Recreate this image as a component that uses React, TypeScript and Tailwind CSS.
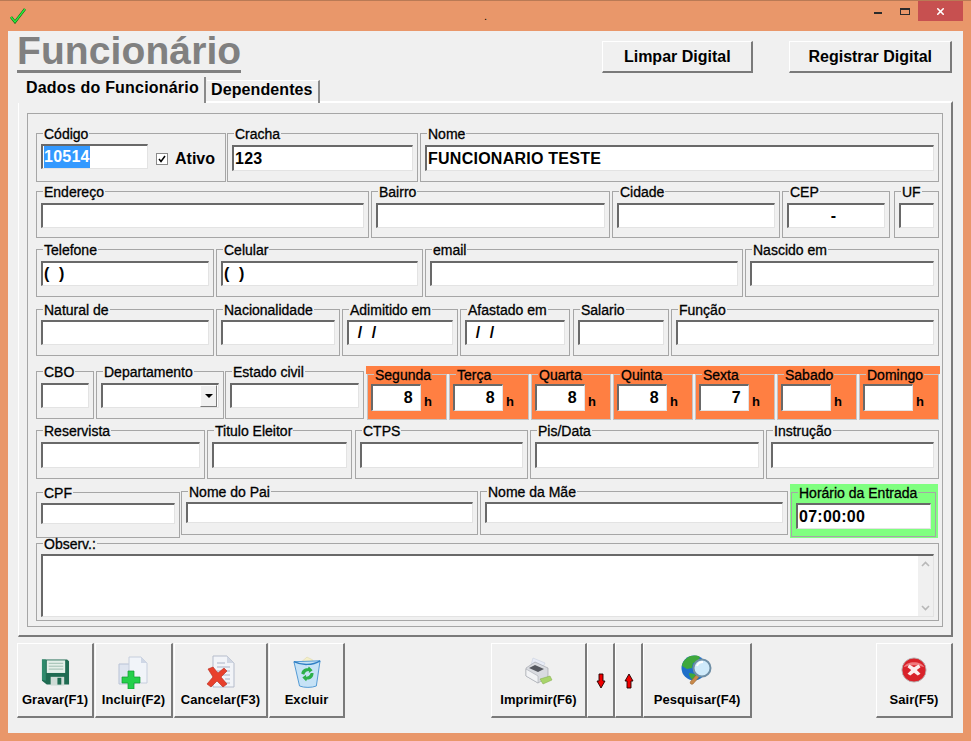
import type { ReactNode } from "react"
import { X } from "lucide-react"

function Group({ label, className, children }: { label: string; className: string; children?: ReactNode }) {
  return (
    <fieldset className={`min-w-0 shrink-0 border border-[#a6a6a6] px-[4px] ${className}`}>
      <legend className="relative top-[1px] ml-[2px] px-[1px] text-[14px] leading-4 text-black [-webkit-text-stroke:0.3px_#000]">{label}</legend>
      {children}
    </fieldset>
  )
}

function Field({ value, className = "h-[25px]", children }: { value?: string; className?: string; children?: ReactNode }) {
  return (
    <div
      className={`flex items-center overflow-hidden border-t-2 border-l-2 border-r border-b border-t-[#696969] border-l-[#696969] border-r-[#e3e3e3] border-b-[#e3e3e3] bg-white pl-[1px] text-[16px] font-bold tracking-[0.25px] whitespace-pre text-black ${className}`}
    >
      {value}
      {children}
    </div>
  )
}

function Day({ label, value }: { label: string; value?: string }) {
  return (
    <fieldset className="h-[54px] w-[80px] min-w-0 shrink-0 border border-[#c4c4c4] bg-[#ff7f42] px-[3px] pt-[2px]">
      <legend className="relative top-[1px] ml-[3px] px-[1px] text-[14px] leading-4 text-black [-webkit-text-stroke:0.3px_#000]">{label}</legend>
      <div className="flex items-end">
        <Field value={value} className="h-[27px] w-[50px] shrink-0 justify-end pr-[7px]" />
        <span className="ml-[3px] text-[13px] leading-[18px] font-bold text-black">h</span>
      </div>
    </fieldset>
  )
}

function ToolButton({ label, className, icon }: { label?: string; className: string; icon: ReactNode }) {
  return (
    <button className={`flex h-[75px] shrink-0 flex-col items-center border-t border-l border-r-2 border-b-2 border-t-white border-l-white border-r-[#7a7a7a] border-b-[#7a7a7a] bg-[#f0f0f0] ${className}`}>
      <span className="mt-[11px] flex h-[34px] items-center justify-center">{icon}</span>
      <span className="mt-[3px] text-[13px] leading-4 font-bold tracking-[0.05px] text-black">{label}</span>
    </button>
  )
}

const FloppyIcon = () => (
  <svg width="29" height="30" viewBox="0 0 30 30">
    <path d="M1 2h26l2 2v24H6l-5-4z" fill="#1f6b52" />
    <path d="M1 2h4v22l-4-1z" fill="#2f8a6c" />
    <rect x="6" y="3" width="19" height="13" fill="#e4efe9" />
    <path d="M8 6h15M8 9h15M8 12h15" stroke="#9dbcae" />
    <rect x="10" y="20" width="14" height="9" fill="#cfdcd6" />
    <rect x="17" y="21" width="4" height="7" fill="#1f6b52" />
  </svg>
)

const AddIcon = () => (
  <svg width="32" height="34" viewBox="0 0 32 34">
    <path d="M1 9h12l4 4v16H1z" fill="#dfe5f0" stroke="#b9c3d6" />
    <path d="M11 2h12l6 6v20H11z" fill="#f1f4f9" stroke="#c6cedd" />
    <path d="M23 2v6h6z" fill="#cfd7e6" />
    <path d="M10 16h6v6h6v6h-6v6h-6v-6H4v-6h6z" fill="#25d04a" stroke="#129a30" strokeWidth="0.7" />
  </svg>
)

const CancelIcon = () => (
  <svg width="32" height="34" viewBox="0 0 32 34">
    <path d="M8 1h14l7 7v24H8z" fill="#f2f4f8" stroke="#b5bccb" />
    <path d="M22 1v7h7z" fill="#d0d6e2" />
    <path d="M12 8h8M12 12h13M12 16h13M18 20h7M20 24h5M20 28h5" stroke="#aab3c6" />
    <path d="M3 14l5-2 5 6 6-5 3 3-6 6 6 7-4 3-6-6-6 6-4-3 6-7z" fill="#e8402c" stroke="#b52a1c" strokeWidth="0.6" />
  </svg>
)

const BinIcon = () => (
  <svg width="28" height="34" viewBox="0 0 30 36">
    <path d="M8 8l7-6 6 3 2 5z" fill="#f4efc8" stroke="#d8d0a0" strokeWidth="0.5" />
    <path d="M1 7l28-1-4 27c-5 2-13 2-18 0z" fill="#c6e2f6" stroke="#4a94d2" />
    <path d="M1 7c8 4 20 4 28-1" fill="none" stroke="#2f7fc4" strokeWidth="1.5" />
    <path d="M9 20c0-4 3-6 7-6l1-2 4 4-4 3v-2c-2 0-4 1-5 4z" fill="#2cb04a" />
    <path d="M22 19c0 5-3 7-7 7l-1 2-4-4 4-3v2c2 0 4-1 5-4z" fill="#2cb04a" />
  </svg>
)

const PrinterIcon = () => (
  <svg width="28" height="30" viewBox="0 0 28 30">
    <path d="M8 1l12 5-3 6-11-4z" fill="#e8ecf6" stroke="#c3cadb" strokeWidth="0.5" />
    <path d="M1 11l9-6 13 6v9l-10 6-12-7z" fill="#d9dbe0" stroke="#9b9ea6" strokeWidth="0.6" />
    <path d="M4 11l6-3 9 4-6 3z" fill="#55585f" />
    <path d="M1 12l12 7v7L1 19z" fill="#f2f3f5" stroke="#9b9ea6" strokeWidth="0.5" />
    <path d="M15 22l10-3 2 4-9 4z" fill="#a8d46a" stroke="#7ea848" strokeWidth="0.5" />
  </svg>
)

const GlobeIcon = () => (
  <svg width="32" height="32" viewBox="0 0 32 32" className="mb-[4px]">
    <circle cx="13" cy="14" r="12.5" fill="#1f6fc8" />
    <path d="M6 4c4-3 10-3 13-1l-2 5-5 1-1 5-5 1-5-3c0-3 2-6 5-8z" fill="#3fa83c" />
    <path d="M8 19l6 1 2 5-4 1c-2-1-4-4-4-7z" fill="#3fa83c" />
    <path d="M10 27l6-7 3 2-7 8c-2 1-4-1-2-3z" fill="#c98a4a" stroke="#8f5d2c" strokeWidth="0.5" />
    <circle cx="21" cy="14" r="8.5" fill="#cfeafa" stroke="#6f8fa6" strokeWidth="2" />
    <path d="M16 12c1-3 4-4 6-4" fill="none" stroke="#fff" strokeWidth="2" />
  </svg>
)

const ExitIcon = () => (
  <svg width="26" height="26" viewBox="0 0 28 28" className="mb-[4px]">
    <circle cx="14" cy="14" r="13" fill="#d9222a" stroke="#b4b4b4" />
    <path d="M3 11c3-7 19-7 22 0-6-3-16-3-22 0z" fill="#f07a7e" />
    <path d="M9 8l5 3 5-3 2 3-4 3 4 4-3 2-4-3-4 3-3-2 4-4-4-3z" fill="#fbeeee" />
  </svg>
)

const ArrowIcon = ({ up }: { up?: boolean }) => (
  <svg width="10" height="16" viewBox="0 0 10 16" className={up ? "mt-[18px]" : "mt-[18px] rotate-180"}>
    <path d="M5 1l4 7H7v7H3V8H1z" fill="#f00000" stroke="#200000" strokeWidth="0.9" />
  </svg>
)

export default function App() {
  return (
    <div className="flex h-[741px] w-[971px] flex-col overflow-hidden border-t border-[#b97a55] bg-[#e9976a] font-['Liberation_Sans',Arial,sans-serif]">
      {/* Title bar */}
      <div className="flex h-[30px] shrink-0 items-start">
        <svg width="16" height="16" viewBox="0 0 16 16" className="mt-[7px] ml-[10px]">
          <path d="M1 9l4 5L15 1" fill="none" stroke="#0c6a18" strokeWidth="2.6" />
          <path d="M1 9l4 5L15 1" fill="none" stroke="#2cf03c" strokeWidth="1.3" />
        </svg>
        <span className="ml-[458px] pt-[9px] text-[11px] leading-3 text-black">.</span>
        <div className="mt-[11px] ml-[387px] h-[2px] w-[8px] bg-[#2b2b2b]" />
        <div className="mt-[7px] ml-[18px] h-[7px] w-[10px] border border-t-2 border-[#2b2b2b]" />
        <div className="ml-[8px] flex h-[20px] w-[45px] items-center justify-center bg-[#c75050]">
          <X size={11} strokeWidth={3.5} className="text-white" />
        </div>
      </div>

      {/* Client area */}
      <div className="ml-[8px] flex h-[702px] w-[955px] shrink-0 flex-col bg-[#f0f0f0]">
        <div className="flex h-[46px] shrink-0 items-start">
          <h1 className="mt-[1px] ml-[9px] border-b-[3px] border-[#808080] text-[39px] leading-[38px] font-bold tracking-[0.1px] text-[#808080]">Funcionário</h1>
          <button className="mt-[10px] ml-[361px] h-[32px] w-[151px] border-t border-l border-r-2 border-b-2 border-t-white border-l-white border-r-[#7a7a7a] border-b-[#7a7a7a] text-[16px] font-bold text-black">
            Limpar Digital
          </button>
          <button className="mt-[10px] ml-[36px] h-[32px] w-[163px] border-t border-l border-r-2 border-b-2 border-t-white border-l-white border-r-[#7a7a7a] border-b-[#7a7a7a] text-[16px] font-bold text-black">
            Registrar Digital
          </button>
        </div>

        {/* Tabs */}
        <div className="relative z-10 ml-[10px] -mb-[2px] flex h-[26px] shrink-0 items-end">
          <div className="flex h-[26px] w-[188px] items-start border-r-2 border-[#8a8a8a] bg-[#f0f0f0] pt-[1px] pl-[8px] text-[16px] leading-[20px] font-bold tracking-[0.2px] text-black">
            Dados do Funcionário
          </div>
          <div className="ml-[1px] flex h-[23px] w-[113px] items-start border-t border-r-2 border-t-white border-r-[#8a8a8a] pl-[4px] text-[16px] leading-[18px] font-bold tracking-[0.1px] text-black">
            Dependentes
          </div>
        </div>

        {/* Tab panel */}
        <div className="ml-[10px] h-[536px] w-[935px] shrink-0 border-t-2 border-l border-r-2 border-b-2 border-t-white border-l-white border-r-[#7a7a7a] border-b-[#7a7a7a] pt-[10px] pl-[8px]">
          <div className="h-[514px] w-[916px] border border-[#a6a6a6] pl-[8px]">
            <div className="mt-[11px] flex h-[57px]">
              <Group label="Código" className="h-[57px] w-[190px] pt-[3px]">
                <div className="flex items-start">
                  <Field className="h-[25px] w-[107px] shrink-0">
                    <span className="bg-[#3399ff] pt-[1px] pb-[1px] text-white">10514</span>
                  </Field>
                  <div className="mt-[9px] ml-[8px] flex h-[12px] w-[12px] items-center justify-center border border-[#8a8a8a] bg-white">
                    <svg width="8" height="8" viewBox="0 0 8 8"><path d="M1 4l2 2.5L7 1" fill="none" stroke="#000" strokeWidth="1.5" /></svg>
                  </div>
                  <span className="mt-[3px] ml-[7px] text-[16px] leading-6 font-bold text-black">Ativo</span>
                </div>
              </Group>
              <Group label="Cracha" className="ml-[1px] h-[57px] w-[191px] pt-[4px]"><Field value="123" className="h-[26px]" /></Group>
              <Group label="Nome" className="ml-[2px] h-[57px] w-[519px] pt-[4px]"><Field value="FUNCIONARIO TESTE" className="h-[26px]" /></Group>
            </div>

            <div className="mt-[1px] flex h-[55px]">
              <Group label="Endereço" className="h-[55px] w-[333px] pt-[4px]"><Field /></Group>
              <Group label="Bairro" className="ml-[2px] h-[55px] w-[239px] pt-[4px]"><Field /></Group>
              <Group label="Cidade" className="ml-[2px] h-[55px] w-[168px] pt-[4px]"><Field /></Group>
              <Group label="CEP" className="ml-[2px] h-[55px] w-[108px] pt-[4px]"><Field value="-" className="h-[25px] justify-center pr-[7px]" /></Group>
              <Group label="UF" className="ml-[4px] h-[55px] w-[45px] pt-[4px]"><Field /></Group>
            </div>

            <div className="mt-[3px] flex h-[56px]">
              <Group label="Telefone" className="h-[56px] w-[178px] pt-[4px]"><Field value="(  )" /></Group>
              <Group label="Celular" className="ml-[2px] h-[56px] w-[207px] pt-[4px]"><Field value="(  )" /></Group>
              <Group label="email" className="ml-[2px] h-[56px] w-[318px] pt-[4px]"><Field /></Group>
              <Group label="Nascido em" className="ml-[2px] h-[56px] w-[194px] pt-[4px]"><Field /></Group>
            </div>

            <div className="mt-[4px] flex h-[55px]">
              <Group label="Natural de" className="h-[55px] w-[178px] pt-[3px]"><Field /></Group>
              <Group label="Nacionalidade" className="ml-[2px] h-[55px] w-[124px] pt-[3px]"><Field /></Group>
              <Group label="Adimitido em" className="ml-[2px] h-[55px] w-[116px] pt-[3px]"><Field value=" /  /" className="h-[25px] indent-[3px]" /></Group>
              <Group label="Afastado em" className="ml-[2px] h-[55px] w-[110px] pt-[3px]"><Field value=" /  /" className="h-[25px] indent-[3px]" /></Group>
              <Group label="Salario" className="ml-[3px] h-[55px] w-[96px] pt-[3px]"><Field /></Group>
              <Group label="Função" className="ml-[2px] h-[55px] w-[268px] pt-[3px]"><Field /></Group>
            </div>

            <div className="mt-[7px] flex h-[56px] items-start">
              <Group label="CBO" className="h-[56px] w-[58px] pt-[4px]"><Field /></Group>
              <Group label="Departamento" className="ml-[2px] h-[56px] w-[128px] pt-[4px]">
                <Field className="h-[25px] justify-end pr-[1px]">
                  <div className="flex h-[22px] w-[17px] items-center justify-center border-t border-l border-r border-b border-t-white border-l-white border-r-[#7a7a7a] border-b-[#7a7a7a] bg-[#f0f0f0]">
                    <svg width="8" height="4" viewBox="0 0 8 4"><path d="M0 0h8L4 4z" fill="#000" /></svg>
                  </div>
                </Field>
              </Group>
              <Group label="Estado civil" className="ml-[1px] h-[56px] w-[139px] pt-[4px]"><Field /></Group>
              <div className="mt-[3px] ml-[2px] flex h-[54px] w-[574px] gap-[2px] bg-[linear-gradient(#ff7f42_8px,#f0f0f0_8px)] pl-[1px]">
                <Day label="Segunda" value="8" />
                <Day label="Terça" value="8" />
                <Day label="Quarta" value="8" />
                <Day label="Quinta" value="8" />
                <Day label="Sexta" value="7" />
                <Day label="Sabado" />
                <Day label="Domingo" />
              </div>
            </div>

            <div className="mt-[3px] flex h-[57px]">
              <Group label="Reservista" className="h-[57px] w-[169px] pt-[4px]"><Field className="h-[26px]" /></Group>
              <Group label="Titulo Eleitor" className="ml-[2px] h-[57px] w-[145px] pt-[4px]"><Field className="h-[26px]" /></Group>
              <Group label="CTPS" className="ml-[3px] h-[57px] w-[173px] pt-[4px]"><Field className="h-[26px]" /></Group>
              <Group label="Pis/Data" className="ml-[2px] h-[57px] w-[234px] pt-[4px]"><Field className="h-[26px]" /></Group>
              <Group label="Instrução" className="ml-[2px] h-[57px] w-[173px] pt-[4px]"><Field className="h-[26px]" /></Group>
            </div>

            <div className="mt-[4px] flex h-[55px] items-start">
              <Group label="CPF" className="mt-[1px] h-[54px] w-[144px] pt-[3px]"><Field className="h-[21px]" /></Group>
              <Group label="Nome do Pai" className="ml-[1px] h-[52px] w-[297px] pt-[3px]"><Field className="h-[21px]" /></Group>
              <Group label="Nome da Mãe" className="ml-[2px] h-[52px] w-[308px] pt-[3px]"><Field className="h-[21px]" /></Group>
              <div className="mt-[1px] ml-[2px] h-[54px] w-[148px] bg-[#80ff80] pl-[1px]">
                <Group label="Horário da Entrada" className="h-[53px] w-[145px] pt-[3px]"><Field value="07:00:00" className="h-[26px]" /></Group>
              </div>
            </div>

            <div className="-mt-[3px] flex">
              <Group label="Observ.:" className="h-[86px] w-[903px] pt-[3px]">
                <div className="flex h-[63px] border-t-2 border-l-2 border-r border-b border-t-[#696969] border-l-[#696969] border-r-[#e3e3e3] border-b-[#e3e3e3] bg-white">
                  <div className="ml-auto flex h-full w-[15px] flex-col items-center justify-between bg-[#f0f0f0] py-[5px]">
                    <svg width="9" height="6" viewBox="0 0 9 6"><path d="M1 5l3.5-3.5L8 5" fill="none" stroke="#b8b8b8" strokeWidth="1.6" /></svg>
                    <svg width="9" height="6" viewBox="0 0 9 6"><path d="M1 1l3.5 3.5L8 1" fill="none" stroke="#b8b8b8" strokeWidth="1.6" /></svg>
                  </div>
                </div>
              </Group>
            </div>
          </div>
        </div>

        {/* Bottom toolbar */}
        <div className="mt-[6px] ml-[9px] flex items-start">
          <ToolButton label="Gravar(F1)" className="w-[77px]" icon={<FloppyIcon />} />
          <ToolButton label="Incluir(F2)" className="ml-[1px] w-[78px]" icon={<AddIcon />} />
          <ToolButton label="Cancelar(F3)" className="ml-[1px] w-[94px]" icon={<CancelIcon />} />
          <ToolButton label="Excluir" className="ml-[1px] w-[76px]" icon={<BinIcon />} />
          <ToolButton label="Imprimir(F6)" className="ml-[146px] w-[96px]" icon={<PrinterIcon />} />
          <ToolButton className="w-[28px]" icon={<ArrowIcon />} />
          <ToolButton className="w-[28px]" icon={<ArrowIcon up />} />
          <ToolButton label="Pesquisar(F4)" className="w-[109px]" icon={<GlobeIcon />} />
          <ToolButton label="Sair(F5)" className="ml-[124px] w-[77px]" icon={<ExitIcon />} />
        </div>
      </div>
    </div>
  )
}
